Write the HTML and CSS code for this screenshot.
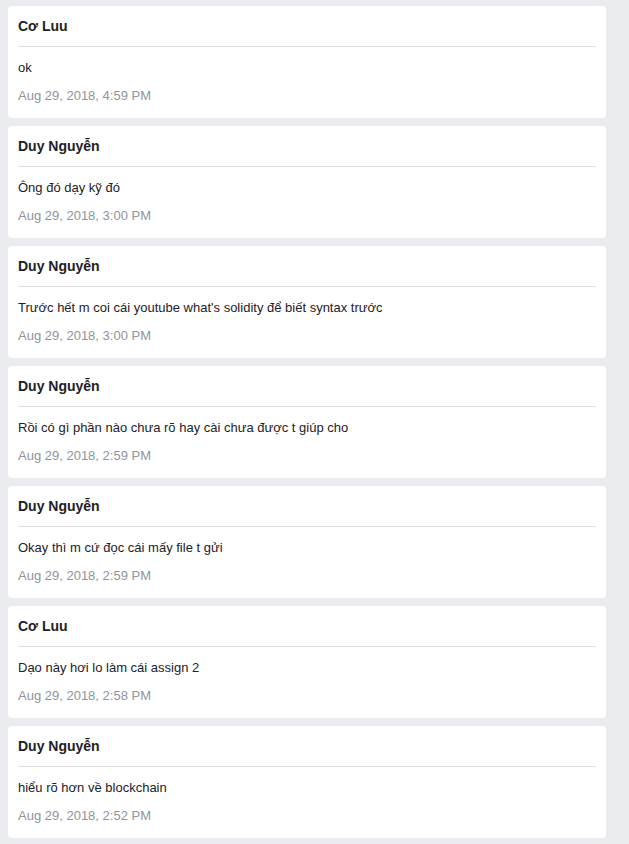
FILE: index.html
```html
<!DOCTYPE html>
<html lang="vi">
<head>
<meta charset="utf-8">
<title>Messages</title>
<link rel="stylesheet" href="styles.css">
</head>
<body>
<main class="list">
  <article class="card">
    <header class="card-head">Cơ Luu</header>
    <p class="card-text">ok</p>
    <p class="card-date">Aug 29, 2018, 4:59 PM</p>
  </article>
  <article class="card">
    <header class="card-head">Duy Nguyễn</header>
    <p class="card-text">Ông đó dạy kỹ đó</p>
    <p class="card-date">Aug 29, 2018, 3:00 PM</p>
  </article>
  <article class="card">
    <header class="card-head">Duy Nguyễn</header>
    <p class="card-text">Trước hết m coi cái youtube what's solidity để biết syntax trước</p>
    <p class="card-date">Aug 29, 2018, 3:00 PM</p>
  </article>
  <article class="card">
    <header class="card-head">Duy Nguyễn</header>
    <p class="card-text">Rồi có gì phần nào chưa rõ hay cài chưa được t giúp cho</p>
    <p class="card-date">Aug 29, 2018, 2:59 PM</p>
  </article>
  <article class="card">
    <header class="card-head">Duy Nguyễn</header>
    <p class="card-text">Okay thì m cứ đọc cái mấy file t gửi</p>
    <p class="card-date">Aug 29, 2018, 2:59 PM</p>
  </article>
  <article class="card">
    <header class="card-head">Cơ Luu</header>
    <p class="card-text">Dạo này hơi lo làm cái assign 2</p>
    <p class="card-date">Aug 29, 2018, 2:58 PM</p>
  </article>
  <article class="card">
    <header class="card-head">Duy Nguyễn</header>
    <p class="card-text">hiểu rõ hơn về blockchain</p>
    <p class="card-date">Aug 29, 2018, 2:52 PM</p>
  </article>
</main>
</body>
</html>
```
FILE: styles.css
```css
html, body {
  margin: 0;
  padding: 0;
}
body {
  background: #e9ebee;
  font-family: "Liberation Sans", Arial, sans-serif;
  color: #1d2129;
}
.list {
  display: flex;
  flex-direction: column;
  gap: 8px;
  padding: 6px 23px 6px 8px;
}
.card {
  background: #ffffff;
  border-radius: 4px;
  padding: 0 10px 13px;
  height: 112px;
  box-sizing: border-box;
}
.card-head {
  font-size: 14px;
  font-weight: bold;
  line-height: 40px;
  border-bottom: 1px solid #dddfe2;
}
.card-text {
  margin: 12px 0 0;
  font-size: 13px;
  line-height: 18px;
}
.card-date {
  margin: 10px 0 0;
  font-size: 13px;
  line-height: 18px;
  color: #90949c;
}
```
